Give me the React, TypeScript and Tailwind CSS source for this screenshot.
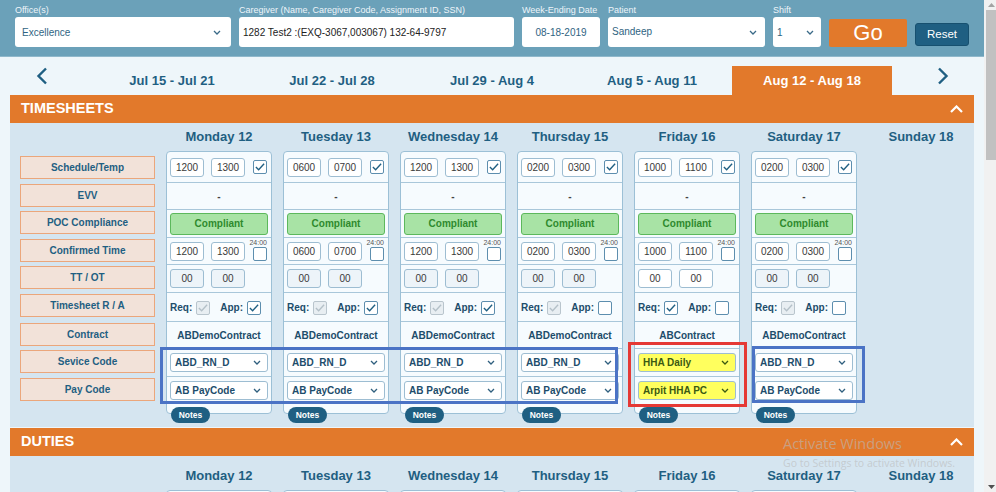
import React from 'react';

type Day = {
  name: string;
  sched: [string, string];
  conf: [string, string];
  ttWhite?: boolean;
  reqEnabled?: boolean;
  app: boolean;
  contract: string;
  svc: string;
  pay: string;
  yellow?: boolean;
};

const days: Day[] = [
  { name: 'Monday 12', sched: ['1200', '1300'], conf: ['1200', '1300'], app: true, contract: 'ABDemoContract', svc: 'ABD_RN_D', pay: 'AB PayCode' },
  { name: 'Tuesday 13', sched: ['0600', '0700'], conf: ['0600', '0700'], app: true, contract: 'ABDemoContract', svc: 'ABD_RN_D', pay: 'AB PayCode' },
  { name: 'Wednesday 14', sched: ['1200', '1300'], conf: ['1200', '1300'], app: true, contract: 'ABDemoContract', svc: 'ABD_RN_D', pay: 'AB PayCode' },
  { name: 'Thursday 15', sched: ['0200', '0300'], conf: ['0200', '0300'], app: false, contract: 'ABDemoContract', svc: 'ABD_RN_D', pay: 'AB PayCode' },
  { name: 'Friday 16', sched: ['1000', '1100'], conf: ['1000', '1100'], ttWhite: true, reqEnabled: true, app: false, contract: 'ABContract', svc: 'HHA Daily', pay: 'Arpit HHA PC', yellow: true },
  { name: 'Saturday 17', sched: ['0200', '0300'], conf: ['0200', '0300'], app: false, contract: 'ABDemoContract', svc: 'ABD_RN_D', pay: 'AB PayCode' },
];

const labels = ['Schedule/Temp', 'EVV', 'POC Compliance', 'Confirmed Time', 'TT / OT', 'Timesheet R / A', 'Contract', 'Sevice Code', 'Pay Code'];
const rowH = ['h-[31px]', 'h-[27px]', 'h-[28px]', 'h-[27px]', 'h-[28px]', 'h-[29px]', 'h-[27px]', 'h-[28px]', 'h-[36px]'];

const tabs = ['Jul 15 - Jul 21', 'Jul 22 - Jul 28', 'Jul 29 - Aug 4', 'Aug 5 - Aug 11', 'Aug 12 - Aug 18'];

function Chevron({ color = '#3a6a88' }: { color?: string }) {
  return (
    <svg width="8" height="5" viewBox="0 0 8 5" className="shrink-0">
      <path d="M1 1 L4 4 L7 1" fill="none" stroke={color} strokeWidth="1.3" />
    </svg>
  );
}

function Check({ checked, disabled }: { checked?: boolean; disabled?: boolean }) {
  return (
    <span className={`w-[14px] h-[14px] rounded-[2px] border flex items-center justify-center shrink-0 ${disabled ? 'border-[#b9c5cd] bg-[#e8eef2]' : 'border-[#5d8eae] bg-white'}`}>
      {checked && (
        <svg viewBox="0 0 14 14" className="w-[12px] h-[12px]">
          <path d="M2.2 7 L5.4 10.2 L11.8 3.2" fill="none" stroke={disabled ? '#b4c0c8' : '#1f5f82'} strokeWidth="1.6" />
        </svg>
      )}
    </span>
  );
}

function TimeBox({ v, shade }: { v: string; shade?: boolean }) {
  return (
    <span className={`w-[34px] h-[19px] rounded-[3px] border border-[#9dbdd2] flex items-center justify-center text-[10px] text-[#3a3a3a] ${shade ? 'bg-[#edf4f9]' : 'bg-white'}`}>{v}</span>
  );
}

function Select({ v, yellow }: { v: string; yellow?: boolean }) {
  return (
    <div className={`mx-[3px] h-[19px] rounded-[3px] border border-[#9dbdd2] flex items-center justify-between pl-[4px] pr-[6px] text-[10px] font-bold ${yellow ? 'bg-[#ffff5e] text-[#3b5a12]' : 'bg-white text-[#1d4d6b]'}`}>
      <span>{v}</span>
      <Chevron color={yellow ? '#3b5a12' : '#2f5f7e'} />
    </div>
  );
}

function Card({ d }: { d: Day }) {
  const row = 'border-b border-[#a9c7da] flex items-center';
  return (
    <div className="w-[106px] rounded-[4px] border border-[#9cc0d6] bg-[#f6fbfe]">
      <div className={`${rowH[0]} ${row} pl-[3px]`}>
        <TimeBox v={d.sched[0]} />
        <span className="w-[7px]" />
        <TimeBox v={d.sched[1]} />
        <span className="w-[8px]" />
        <Check checked />
      </div>
      <div className={`${rowH[1]} ${row} justify-center text-[10px] font-bold text-[#444]`}>-</div>
      <div className={`${rowH[2]} ${row} px-[3px]`}>
        <div className="w-full h-[22px] rounded-[3px] border border-[#5cb85c] bg-[#a8e3a5] flex items-center justify-center text-[10px] font-bold text-[#2e8a2e]">Compliant</div>
      </div>
      <div className={`${rowH[3]} ${row} pl-[3px]`}>
        <TimeBox v={d.conf[0]} />
        <span className="w-[7px]" />
        <TimeBox v={d.conf[1]} />
        <span className="w-[4px]" />
        <div className="flex flex-col items-end w-[18px] -mt-[2px]">
          <span className="text-[7px] leading-[8px] text-[#555]">24:00</span>
          <Check />
        </div>
      </div>
      <div className={`${rowH[4]} ${row} pl-[3px]`}>
        <TimeBox v="00" shade={!d.ttWhite} />
        <span className="w-[7px]" />
        <TimeBox v="00" shade={!d.ttWhite} />
      </div>
      <div className={`${rowH[5]} ${row} pl-[3px] text-[10px] font-bold text-[#1d4d6b]`}>
        <span>Req:</span>
        <span className="w-[4px]" />
        <span className="mt-[2px]"><Check checked disabled={!d.reqEnabled} /></span>
        <span className="w-[10px]" />
        <span>App:</span>
        <span className="w-[4px]" />
        <span className="mt-[2px]"><Check checked={d.app} /></span>
      </div>
      <div className={`${rowH[6]} ${row} justify-center text-[10px] font-bold text-[#1d4d6b]`}>{d.contract}</div>
      <div className={`${rowH[7]} ${row}`}>
        <div className="w-full"><Select v={d.svc} yellow={d.yellow} /></div>
      </div>
      <div className={`${rowH[8]} pt-[4px]`}>
        <Select v={d.pay} yellow={d.yellow} />
      </div>
    </div>
  );
}

function SectionBar({ title }: { title: string }) {
  return (
    <div className="mx-[10px] h-[28px] bg-[#e2792b] flex items-center justify-between pl-[11px] pr-[11px]">
      <span className="text-white font-bold text-[14.5px]">{title}</span>
      <svg width="13" height="8" viewBox="0 0 13 8">
        <path d="M1 7 L6.5 1.5 L12 7" fill="none" stroke="#fff" strokeWidth="2.2" />
      </svg>
    </div>
  );
}

function Field({ label, w, children }: { label: string; w: string; children: React.ReactNode }) {
  return (
    <div className={`${w} flex flex-col`}>
      <span className="h-[17px] pt-[3px] leading-[14px] text-[9px] text-[#eef5f9] whitespace-nowrap">{label}</span>
      <div className="h-[30px] rounded-[3px] bg-white flex items-center">{children}</div>
    </div>
  );
}

export default function App() {
  return (
    <div className="w-[996px] h-[492px] overflow-hidden flex relative" style={{ fontFamily: '"Liberation Sans", Arial, sans-serif' }}>
      <div className="w-[984px] h-full overflow-hidden bg-[#eef6fa]">
        {/* top filter bar */}
        <div className="h-[57px] bg-[#6ba1b9] flex items-start gap-[8px] pl-[15px] border-b border-[#8fb8cb]">
          <Field label="Office(s)" w="w-[216px]">
            <div className="flex-1 flex items-center justify-between pl-[7px] pr-[10px] text-[10px] text-[#2f6482]">
              <span>Excellence</span>
              <Chevron />
            </div>
          </Field>
          <Field label="Caregiver (Name, Caregiver Code, Assignment ID, SSN)" w="w-[275px]">
            <span className="pl-[4px] text-[10px] text-[#222]">1282 Test2 :(EXQ-3067,003067) 132-64-9797</span>
          </Field>
          <Field label="Week-Ending Date" w="w-[78px]">
            <span className="w-full text-center text-[10px] text-[#2f6482]">08-18-2019</span>
          </Field>
          <Field label="Patient" w="w-[157px]">
            <div className="flex-1 flex items-center justify-between pl-[4px] pr-[8px] text-[10px] text-[#2f6482] -mt-[2px]">
              <span>Sandeep</span>
              <span className="mt-[2px]"><Chevron /></span>
            </div>
          </Field>
          <Field label="Shift" w="w-[48px]">
            <div className="flex-1 flex items-center justify-between pl-[4px] pr-[7px] text-[10px] text-[#2f6482]">
              <span>1</span>
              <Chevron />
            </div>
          </Field>
          <button className="mt-[19px] w-[78px] h-[28px] rounded-[2px] bg-[#e2792b] text-white text-[22px] leading-none flex items-center justify-center">Go</button>
          <button className="mt-[23px] w-[54px] h-[23px] rounded-[3px] bg-[#1f5f82] border border-[#17506f] text-white text-[11.5px] flex items-center justify-center">Reset</button>
        </div>

        {/* week tabs */}
        <div className="h-[38px] mx-[10px] flex items-end">
          <div className="w-[82px] h-full flex items-center pl-[26px]">
            <svg width="12" height="18" viewBox="0 0 12 18">
              <path d="M10 1.5 L2.5 9 L10 16.5" fill="none" stroke="#1f5f82" strokeWidth="2.4" />
            </svg>
          </div>
          {tabs.map((t, i) => (
            <div key={t} className={`w-[160px] h-[29px] flex items-center justify-center text-[13px] font-bold ${i === 4 ? 'bg-[#e2792b] text-white' : 'text-[#1f5f82]'}`}>{t}</div>
          ))}
          <div className="w-[82px] h-full flex items-center pl-[45px]">
            <svg width="12" height="18" viewBox="0 0 12 18">
              <path d="M2 1.5 L9.5 9 L2 16.5" fill="none" stroke="#1f5f82" strokeWidth="2.4" />
            </svg>
          </div>
        </div>

        {/* timesheets */}
        <SectionBar title="TIMESHEETS" />
        <div className="mx-[10px] bg-[#d5e5f0] relative flex gap-[11px] pl-[10px] pb-[4px]">
          <div className="w-[135px] flex flex-col">
            <div className="h-[29px]" />
            {labels.map((l, i) => (
              <div key={l} className={`${rowH[i]} flex items-start ${i === 0 ? 'pt-[4px]' : 'pt-[1px]'}`}>
                <div className="w-full h-[23px] bg-[#f2e2d9] border border-[#eba67b] flex items-center justify-center text-[10px] font-bold text-[#1f5f82]">{l}</div>
              </div>
            ))}
          </div>
          {days.map((d) => (
            <div key={d.name} className="w-[106px] flex flex-col">
              <div className="h-[28px] flex items-center justify-center text-[13px] font-bold text-[#1f5f82]">{d.name}</div>
              <Card d={d} />
              <span className="-mt-[7px] ml-[5px] w-[39px] h-[16px] rounded-full bg-[#1f5f82] text-white text-[8.5px] font-bold flex items-center justify-center relative">Notes</span>
            </div>
          ))}
          <div className="w-[106px] h-[28px] flex items-center justify-center text-[13px] font-bold text-[#1f5f82]">Sunday 18</div>

          {/* highlight boxes */}
          <div className="absolute left-[150px] top-[224px] w-[458px] h-[57px] border-[3px] border-[#4b73c5] pointer-events-none" />
          <div className="absolute left-[618px] top-[219px] w-[119px] h-[65px] border-[3px] border-[#e53935] pointer-events-none" />
          <div className="absolute left-[742px] top-[223px] w-[113px] h-[57px] border-[3px] border-[#4b73c5] pointer-events-none" />
        </div>

        {/* duties */}
        <div className="mt-[1px]">
          <SectionBar title="DUTIES" />
        </div>
        <div className="mx-[10px] h-[80px] bg-[#d5e5f0] flex gap-[11px] pl-[10px] pt-[6px]">
          <div className="w-[135px]" />
          {days.map((d) => (
            <div key={d.name} className="w-[106px] flex flex-col">
              <div className="h-[28px] flex items-center justify-center text-[13px] font-bold text-[#1f5f82]">{d.name}</div>
              <div className="h-[40px] rounded-[4px] border border-[#9cc0d6] bg-[#f6fbfe]" />
            </div>
          ))}
          <div className="w-[106px] h-[28px] flex items-center justify-center text-[13px] font-bold text-[#1f5f82]">Sunday 18</div>
        </div>
      </div>

      {/* scrollbar */}
      <div className="w-[12px] h-full bg-[#f1f1f1] flex flex-col items-end">
        <div className="w-[10px] h-[10px] flex items-center justify-center">
          <svg width="7" height="4" viewBox="0 0 7 4"><path d="M0 4 L3.5 0 L7 4 Z" fill="#a3a3a3" /></svg>
        </div>
        <div className="w-[10px] h-[150px] bg-[#c1c1c1]" />
        <div className="flex-1" />
        <div className="w-[10px] h-[10px] flex items-center justify-center">
          <svg width="7" height="4" viewBox="0 0 7 4"><path d="M0 0 L3.5 4 L7 0 Z" fill="#505050" /></svg>
        </div>
      </div>

      {/* windows watermark */}
      <div className="absolute left-[783px] top-[434px] pointer-events-none text-[rgba(185,185,185,0.6)]" style={{ fontFamily: '"Open Sans", sans-serif' }}>
        <div className="text-[14.5px] leading-[20px]">Activate Windows</div>
        <div className="text-[10.5px] leading-[14px] mt-[2px]">Go to Settings to activate Windows.</div>
      </div>
    </div>
  );
}
